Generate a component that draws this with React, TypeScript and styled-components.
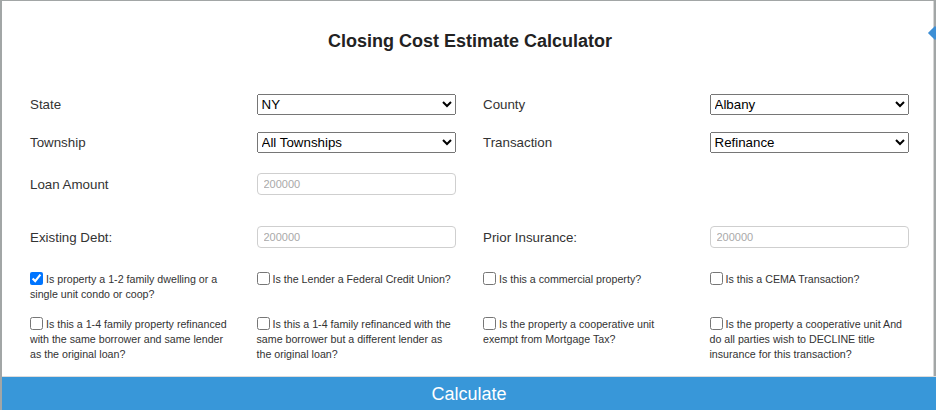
import React, { ReactElement } from 'react'
import styled, { createGlobalStyle } from 'styled-components'

const fields = [
    { label: 'State', kind: 'select', value: 'NY', label2: 'County', kind2: 'select', value2: 'Albany', gap: 42 },
    { label: 'Township', kind: 'select', value: 'All Townships', label2: 'Transaction', kind2: 'select', value2: 'Refinance', gap: 17 },
    { label: 'Loan Amount', kind: 'input', value: '200000', gap: 20 },
    { label: 'Existing Debt:', kind: 'input', value: '200000', label2: 'Prior Insurance:', kind2: 'input', value2: '200000', gap: 31 },
]

const checks = [
    [
        { text: 'Is property a 1-2 family dwelling or a single unit condo or coop?', checked: true },
        { text: 'Is the Lender a Federal Credit Union?' },
        { text: 'Is this a commercial property?' },
        { text: 'Is this a CEMA Transaction?' },
    ],
    [
        { text: 'Is this a 1-4 family property refinanced with the same borrower and same lender as the original loan?' },
        { text: 'Is this a 1-4 family refinanced with the same borrower but a different lender as the original loan?' },
        { text: 'Is the property a cooperative unit exempt from Mortgage Tax?' },
        { text: 'Is the property a cooperative unit And do all parties wish to DECLINE title insurance for this transaction?' },
    ],
]

const Control = ({ kind, value }: { kind?: string, value?: string }) : ReactElement | null => {
    if (!kind) return null
    if (kind === 'select') {
        return <Select defaultValue = { value }>
            <option>{ value }</option>
        </Select>
    }
    return <Input type = 'text' placeholder = { value } />
}

const App = () : ReactElement => {
    return <Page>
        <GlobalStyle />
        <Card>
            <Title>Closing Cost Estimate Calculator</Title>
            <Form>
                {
                    fields.map(f => <Row key = { f.label } $gap = { f.gap }>
                        <Label>{ f.label }</Label>
                        <Control kind = { f.kind } value = { f.value } />
                        { f.label2 ? <Label>{ f.label2 }</Label> : <div /> }
                        <Control kind = { f.kind2 } value = { f.value2 } />
                    </Row>)
                }
                {
                    checks.map((row, i) => <CheckRow key = { i } $gap = { i === 0 ? 24 : 15 }>
                        {
                            row.map(c => <CheckLabel key = { c.text }>
                                <Box type = 'checkbox' defaultChecked = { c.checked } />
                                { c.text }
                            </CheckLabel>)
                        }
                    </CheckRow>)
                }
            </Form>
        </Card>
        <Calculate>Calculate</Calculate>
        <Marker />
    </Page>
}

const GlobalStyle = createGlobalStyle`
    body {
        margin: 0;
        font-family: "Liberation Sans", Arial, sans-serif;
        background: #a2a6a6;
    }
`

const Page = styled.div`
    position: relative;
    height: 410px;
    padding: 1px 0 0 2px;
    box-sizing: border-box;
    overflow: hidden;
    background: #a2a6a6;
`

const Card = styled.div`
    width: 932px;
    height: 375px;
    box-sizing: border-box;
    padding-top: 30px;
    background: #fff;
    border-right: 1px solid #d6d6d6;
`

const Title = styled.h2`
    margin: 0;
    padding-left: 5px;
    font-size: 18px;
    line-height: 21px;
    font-weight: bold;
    text-align: center;
    color: #222;
`

const Form = styled.div`
    padding-left: 28px;
`

const Row = styled.div<{ $gap: number }>`
    display: grid;
    grid-template-columns: repeat(4, 226.5px);
    align-items: center;
    margin-top: ${p => p.$gap}px;
`

const CheckRow = styled(Row)`
    align-items: start;
`

const Label = styled.span`
    font-size: 13.33px;
    color: #333;
`

const Select = styled.select`
    width: 199px;
    height: 21px;
    font-family: "Liberation Sans", Arial, sans-serif;
    font-size: 13.33px;
    color: #000;
`

const Input = styled.input`
    width: 199px;
    height: 22px;
    box-sizing: border-box;
    padding: 0 6px;
    border: 1px solid #cfcfcf;
    border-radius: 4px;
    font-family: "Liberation Sans", Arial, sans-serif;
    font-size: 11px;

    &::placeholder {
        color: #a9a9a9;
    }
`

const CheckLabel = styled.label`
    display: block;
    width: 200px;
    font-size: 10.67px;
    line-height: 15px;
    color: #333;
`

const Box = styled.input`
    width: 13px;
    height: 13px;
    margin: 0 3px 0 0;
    vertical-align: -2px;
`

const Calculate = styled.button`
    display: block;
    width: 934px;
    height: 35px;
    padding: 0;
    border: none;
    border-top: 1px solid #dcdcdc;
    background: #3897d9;
    color: #fff;
    font-family: "Liberation Sans", Arial, sans-serif;
    font-size: 18px;
    text-align: center;
`

const Marker = styled.div`
    position: absolute;
    left: 930px;
    top: 28px;
    width: 10px;
    height: 10px;
    background: #3d8fd5;
    transform: rotate(45deg);
`

export default App
